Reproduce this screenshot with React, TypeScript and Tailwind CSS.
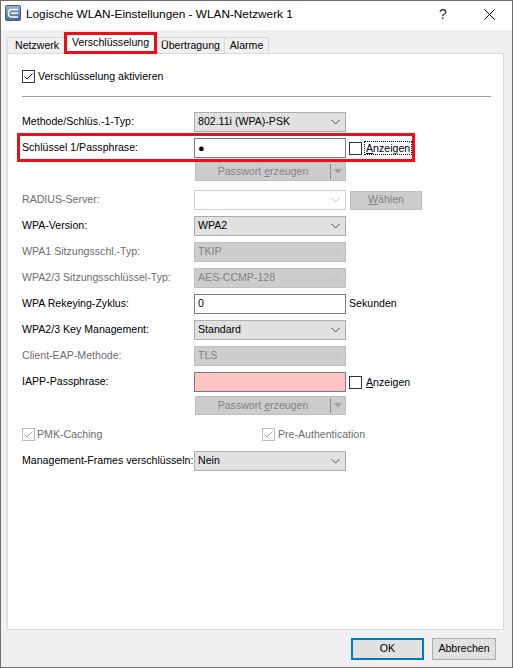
import React from "react";

const Chevron = ({ color }: { color: string }) => (
  <svg
    width="9"
    height="5"
    viewBox="0 0 9 5"
    className="absolute right-[5px] top-1/2 -translate-y-1/2"
  >
    <path d="M0.5 0.5 L4.5 4.5 L8.5 0.5" fill="none" stroke={color} strokeWidth="1" />
  </svg>
);

function Select({ value, variant }: { value?: string; variant: "on" | "off" | "empty" }) {
  const cls =
    variant === "on"
      ? "bg-[#e1e1e1] border-[#adadad] text-black"
      : variant === "off"
      ? "bg-[#cccccc] border-[#bfbfbf] text-[#838383]"
      : "bg-white border-[#cccccc]";
  return (
    <div className={`relative w-[152px] h-[20px] border ${cls} flex items-center pl-[3px]`}>
      {value}
      <Chevron color={variant === "on" ? "#505050" : "#bdbdbd"} />
    </div>
  );
}

function Check({ checked, disabled }: { checked?: boolean; disabled?: boolean }) {
  const border = disabled ? "#bcbcbc" : "#333333";
  const tick = disabled ? "#a6a6a6" : "#000000";
  return (
    <svg width="13" height="13" viewBox="0 0 13 13" className="shrink-0">
      <rect x="0.5" y="0.5" width="12" height="12" fill="white" stroke={border} />
      {checked && <path d="M2.5 6.5 L5 9 L10.5 3.5" fill="none" stroke={tick} strokeWidth="1" />}
    </svg>
  );
}

function Row({
  label,
  disabled,
  children,
  className,
}: {
  label: string;
  disabled?: boolean;
  children?: React.ReactNode;
  className: string;
}) {
  return (
    <div className={`flex items-center h-[20px] ${className}`}>
      <div className={`w-[172px] whitespace-nowrap ${disabled ? "text-[#6d6d6d]" : "text-black"}`}>
        {label}
      </div>
      {children}
    </div>
  );
}

function GenButton() {
  return (
    <div className="ml-[1px] w-[151px] h-[19px] bg-[#cccccc] border border-[#bfbfbf] flex items-center text-[#838383]">
      <div className="flex-1 text-center">
        Passwort <span className="underline">e</span>rzeugen
      </div>
      <div className="w-px h-[15px] bg-[#8a8a8a]" />
      <div className="w-[14px] flex justify-center items-center">
        <svg width="8" height="5" viewBox="0 0 8 5">
          <path d="M0 0 L8 0 L4 4.5 Z" fill="#9c9c9c" />
        </svg>
      </div>
    </div>
  );
}

function Anzeigen({ focus }: { focus?: boolean }) {
  return (
    <div className="flex items-center ml-[3px]">
      <Check />
      <span
        className={`ml-[2px] px-px leading-[12px] border border-dotted ${
          focus ? "border-black" : "border-transparent"
        }`}
      >
        <span className="underline">A</span>nzeigen
      </span>
    </div>
  );
}

export default function App() {
  return (
    <div className="w-[513px] h-[668px] bg-[#f0f0f0] border border-[#6e6e6e] flex flex-col font-['Liberation_Sans',Arial,sans-serif] text-[10.6px] text-black">
      {/* Title bar */}
      <div className="h-[29px] bg-white flex items-center pb-[2px] shrink-0">
        <svg width="16" height="16" viewBox="0 0 16 16" className="ml-[4px] self-start mt-[4px]">
          <defs>
            <linearGradient id="tg" x1="0" y1="0" x2="0" y2="1">
              <stop offset="0" stopColor="#9db6d2" />
              <stop offset="1" stopColor="#3f6894" />
            </linearGradient>
          </defs>
          <rect x="0.5" y="0.5" width="15" height="15" rx="1.5" fill="url(#tg)" stroke="#3a5f88" />
          <path
            d="M13 4.5 H6.5 Q3.5 4.5 3.5 7.5 V9 Q3.5 12 6.5 12 H13 M6 8.2 H13"
            fill="none"
            stroke="white"
            strokeWidth="1.4"
          />
        </svg>
        <div className="ml-[5px] text-[11.8px] whitespace-nowrap">
          Logische WLAN-Einstellungen - WLAN-Netzwerk 1
        </div>
        <div className="flex-1" />
        <div className="w-[46px] flex justify-center text-[14px] text-[#222]">?</div>
        <div className="w-[46px] flex justify-center">
          <svg width="11" height="11" viewBox="0 0 11 11">
            <path d="M0.5 0.5 L10.5 10.5 M10.5 0.5 L0.5 10.5" stroke="#000" strokeWidth="1" />
          </svg>
        </div>
      </div>

      {/* Tab strip */}
      <div className="flex items-end h-[23px] pl-[6px] shrink-0">
        <div className="w-[57px] h-[16px] border-t border-l border-[#d9d9d9] bg-[#f0f0f0] pl-[7px] flex items-center">
          Netzwerk
        </div>
        <div className="relative z-10 -mb-px w-[93px] h-[22px] border-[3px] border-[#e8111b] bg-white flex items-center justify-center">
          Verschlüsselung
        </div>
        <div className="w-[68px] h-[16px] border-t border-r border-[#d9d9d9] bg-[#f0f0f0] flex items-center justify-center">
          Übertragung
        </div>
        <div className="w-[44px] h-[16px] border-t border-r border-[#d9d9d9] bg-[#f0f0f0] flex items-center justify-center">
          Alarme
        </div>
      </div>

      {/* Panel */}
      <div className="relative ml-[6px] w-[497px] h-[577px] border border-[#d9d9d9] bg-white pl-[14px] pt-[16px] shrink-0">
        <div className="flex items-center h-[13px]">
          <Check checked />
          <span className="ml-[3px]">Verschlüsselung aktivieren</span>
        </div>
        <div className="mt-[13px] h-px w-[469px] bg-[#a0a0a0]" />

        <Row label="Methode/Schlüs.-1-Typ:" className="mt-[15px]">
          <Select value="802.11i (WPA)-PSK" variant="on" />
        </Row>
        <Row label="Schlüssel 1/Passphrase:" className="mt-[6px]">
          <div className="w-[152px] h-[20px] border border-[#7a7a7a] bg-white flex items-center pl-[3px]">
            <span className="text-[11px] leading-none">●</span>
          </div>
          <Anzeigen focus />
        </Row>
        <div className="flex mt-[4px] h-[19px]">
          <div className="w-[172px]" />
          <GenButton />
        </div>
        <Row label="RADIUS-Server:" disabled className="mt-[9px]">
          <Select variant="empty" />
          <div className="ml-[4px] w-[72px] h-[19px] bg-[#cccccc] border border-[#bfbfbf] text-[#838383] flex items-center justify-center">
            <span>
              <span className="underline">W</span>ählen
            </span>
          </div>
        </Row>
        <Row label="WPA-Version:" className="mt-[6px]">
          <Select value="WPA2" variant="on" />
        </Row>
        <Row label="WPA1 Sitzungsschl.-Typ:" disabled className="mt-[6px]">
          <Select value="TKIP" variant="off" />
        </Row>
        <Row label="WPA2/3 Sitzungsschlüssel-Typ:" disabled className="mt-[6px]">
          <Select value="AES-CCMP-128" variant="off" />
        </Row>
        <Row label="WPA Rekeying-Zyklus:" className="mt-[6px]">
          <div className="w-[152px] h-[20px] border border-[#7a7a7a] bg-white flex items-center pl-[3px]">
            0
          </div>
          <span className="ml-[3px]">Sekunden</span>
        </Row>
        <Row label="WPA2/3 Key Management:" className="mt-[6px]">
          <Select value="Standard" variant="on" />
        </Row>
        <Row label="Client-EAP-Methode:" disabled className="mt-[6px]">
          <Select value="TLS" variant="off" />
        </Row>
        <Row label="IAPP-Passphrase:" className="mt-[6px]">
          <div className="w-[152px] h-[20px] border border-[#7a7a7a] bg-[#ffc4c4]" />
          <Anzeigen />
        </Row>
        <div className="flex mt-[4px] h-[19px]">
          <div className="w-[172px]" />
          <GenButton />
        </div>
        <div className="flex items-center h-[13px] mt-[13px] text-[#6d6d6d]">
          <div className="w-[240px] flex items-center">
            <Check checked disabled />
            <span className="ml-[2px]">PMK-Caching</span>
          </div>
          <Check checked disabled />
          <span className="ml-[3px]">Pre-Authentication</span>
        </div>
        <Row label="Management-Frames verschlüsseln:" className="mt-[10px]">
          <Select value="Nein" variant="on" />
        </Row>

        {/* annotation overlay */}
        <div className="absolute left-[9px] top-[79px] w-[398px] h-[29px] border-[3px] border-[#e8111b] pointer-events-none" />
      </div>

      {/* Buttons */}
      <div className="flex justify-end gap-[8px] pr-[16px] mt-[8px]">
        <div className="w-[73px] h-[22px] border-2 border-[#0078d7] bg-[#e1e1e1] flex items-center justify-center">
          OK
        </div>
        <div className="w-[64px] h-[22px] border border-[#adadad] bg-[#e1e1e1] flex items-center justify-center">
          Abbrechen
        </div>
      </div>
    </div>
  );
}
